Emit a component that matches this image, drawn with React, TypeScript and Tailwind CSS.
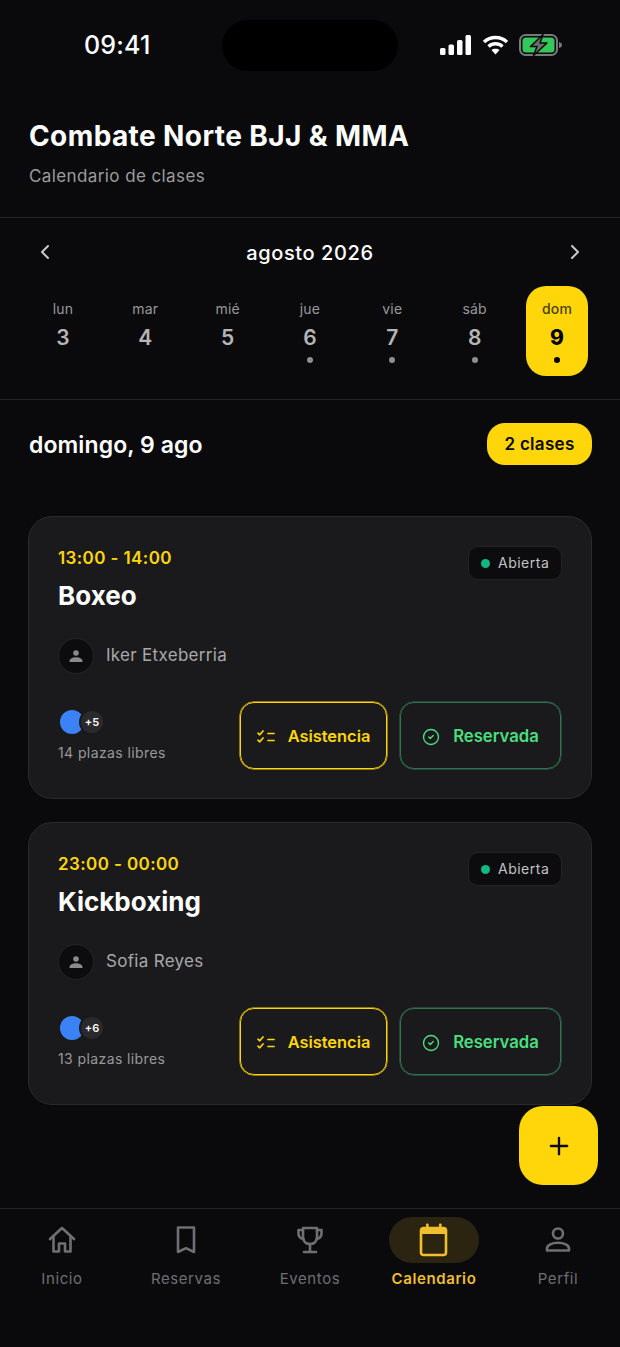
import React from "react";
import { ChevronLeft, ChevronRight, Plus, CircleCheck } from "lucide-react";

const days = [
  { d: "lun", n: "3", dot: false },
  { d: "mar", n: "4", dot: false },
  { d: "mié", n: "5", dot: false },
  { d: "jue", n: "6", dot: true },
  { d: "vie", n: "7", dot: true },
  { d: "sáb", n: "8", dot: true },
  { d: "dom", n: "9", dot: true, active: true },
];

function StatusIcons() {
  return (
    <div className="flex items-center gap-[10px]">
      <svg width="32" height="20" viewBox="0 0 32 20" fill="white">
        <rect x="0" y="13" width="5.5" height="7" rx="1.5" />
        <rect x="8.5" y="9.5" width="5.5" height="10.5" rx="1.5" />
        <rect x="17" y="5" width="5.5" height="15" rx="1.5" />
        <rect x="25.5" y="0" width="5.5" height="20" rx="1.5" />
      </svg>
      <svg width="27" height="20" viewBox="0 0 27 20" fill="none" stroke="white" strokeWidth="3.4" strokeLinecap="butt">
        <path d="M2 7 C8.5 1 18.5 1 25 7" />
        <path d="M6.5 11.5 C10.5 7.8 16.5 7.8 20.5 11.5" />
        <path d="M13.5 19.5 L9.5 15 C11.5 13.2 15.5 13.2 17.5 15 Z" fill="white" stroke="none" />
      </svg>
      <svg width="44" height="22" viewBox="0 0 44 22" fill="none">
        <rect x="1" y="1" width="37" height="20" rx="5.5" stroke="#77797c" strokeWidth="2" />
        <rect x="3.5" y="3.5" width="32" height="15" rx="3.5" fill="#34c759" />
        <path d="M40 8 C42 8.5 43 9.5 43 11 C43 12.5 42 13.5 40 14 Z" fill="#77797c" />
        <path d="M24 0.5 L11.5 12.5 H18 L14.5 21.5 L28 9 H21 Z" fill="#6a6c6e" stroke="#0a0a0c" strokeWidth="1.5" strokeLinejoin="round" />
      </svg>
    </div>
  );
}

function PersonSolid() {
  return (
    <svg width="14" height="14" viewBox="0 0 14 14" fill="#8a8a8e">
      <circle cx="7" cy="4" r="2.8" />
      <path d="M0.5 12 C0.5 9.5 4 8.2 7 8.2 C10 8.2 13.5 9.5 13.5 12 V13 H0.5 Z" />
    </svg>
  );
}

function Checklist() {
  return (
    <svg width="18" height="14" viewBox="0 0 18 14" fill="none" stroke="#ffd60a" strokeWidth="1.7" strokeLinecap="round" strokeLinejoin="round">
      <path d="M1 3.2 L2.8 4.8 L6 1" />
      <path d="M1 10.2 L2.8 11.8 L6 8" />
      <path d="M11 3.5 H17" />
      <path d="M11 10.5 H17" />
    </svg>
  );
}

function ClassCard({ time, title, coach, extra, free }: { time: string; title: string; coach: string; extra: string; free: string }) {
  return (
    <div className="h-[283px] rounded-[24px] border border-[#2a2a2c] bg-[#1a1a1c] pl-[29px] pr-[29px] pt-[28px] flex flex-col">
      <div className="flex justify-between items-start">
        <div>
          <div className="text-[17px] leading-[26px] font-semibold tracking-[0.4px] text-[#ffd60a]">{time}</div>
          <div className="mt-[9px] text-[26px] leading-[32px] font-bold text-white">{title}</div>
        </div>
        <div className="flex items-center h-[34px] mt-[1px] w-[94px] rounded-[10px] border border-[#242426] bg-[#0c0c0e] pl-[12px] gap-[8px]">
          <span className="w-[9px] h-[9px] rounded-full bg-[#10b981]" />
          <span className="pb-[2px] text-[14px] tracking-[0.5px] text-[#c2c2c4]">Abierta</span>
        </div>
      </div>
      <div className="mt-[26px] flex items-center gap-[12px]">
        <div className="w-[36px] h-[36px] rounded-full bg-[#0c0c0e] border border-[#242426] flex items-center justify-center">
          <PersonSolid />
        </div>
        <span className="text-[17px] tracking-[0.3px] text-[#a8a8aa]">{coach}</span>
      </div>
      <div className="mt-[28px] flex items-center">
        <div className="w-[182px] pt-[2px]">
          <div className="flex items-center h-[24px]">
            <span className="w-[24px] h-[24px] rounded-full bg-[#3b82f6] ml-[2px]" />
            <span className="w-[26px] h-[26px] -ml-[5px] rounded-full bg-[#2a2a2c] border-[2px] border-[#1a1a1c] flex items-center justify-center text-[11px] font-semibold text-white relative">{extra}</span>
          </div>
          <div className="mt-[9px] text-[14px] leading-[20px] tracking-[0.4px] text-[#98989a]">{free}</div>
        </div>
        <div className="flex gap-[13px]">
          <div className="w-[147px] h-[67px] pt-[2px] rounded-[14px] border border-[#ffd60a] shadow-[0_0_0_0.5px_#ffd60a] flex items-center justify-center gap-[13px] text-[#ffd60a] text-[16.4px] font-semibold">
            <Checklist />
            <span>Asistencia</span>
          </div>
          <div className="w-[161px] h-[67px] pt-[2px] rounded-[14px] border border-[#2f7350] shadow-[0_0_0_0.5px_#2f7350] flex items-center justify-center gap-[13px] text-[#4ade80] text-[16.7px] font-semibold">
            <CircleCheck size={18} strokeWidth={1.8} />
            <span>Reservada</span>
          </div>
        </div>
      </div>
    </div>
  );
}

const Gray = "#6e6e73";

function NavItem({ label, icon, active }: { label: string; icon: React.ReactNode; active?: boolean }) {
  return (
    <div className="w-[124px] flex flex-col items-center">
      <div className={`w-[90px] h-[46px] rounded-[23px] flex items-center justify-center ${active ? "bg-[#2b2411]" : ""}`}>{icon}</div>
      <div className={`mt-[5px] text-[15px] leading-[22px] tracking-[0.6px] ${active ? "font-semibold text-[#f0bf2e]" : "text-[#6e6e73]"}`}>{label}</div>
    </div>
  );
}

export default function App() {
  return (
    <div className="relative w-[620px] h-[1347px] bg-[#0a0a0c] overflow-hidden flex flex-col text-white" style={{ fontFamily: "Inter, 'Liberation Sans', sans-serif" }}>
      <div className="h-[91px] flex items-start pt-[20px] pl-[84px] shrink-0">
        <div className="w-[68px] h-[51px] flex items-center text-[25px] font-medium tracking-[0.2px] text-white">09:41</div>
        <div className="ml-[70px] w-[176px] h-[51px] rounded-[26px] bg-black" />
        <div className="ml-[42px] h-[51px] flex items-center -mt-[1px]"><StatusIcons /></div>
      </div>

      <div className="h-[127px] shrink-0 border-b border-[#232426] px-[29px] pt-[25px]">
        <h1 className="text-[28px] leading-[40px] font-bold tracking-[0.4px] text-white">Combate Norte BJJ &amp; MMA</h1>
        <p className="mt-[9px] text-[17px] leading-[22px] tracking-[0.4px] text-[#9c9c9e]">Calendario de clases</p>
      </div>

      <div className="h-[182px] shrink-0 border-b border-[#232426]">
        <div className="flex items-center justify-between h-[35px] mt-[17px] px-[33px]">
          <ChevronLeft size={24} color="#c8c8cc" strokeWidth={2} className="-mt-[2px]" />
          <span className="text-[20px] font-medium tracking-[0.6px] text-white">agosto 2026</span>
          <ChevronRight size={24} color="#c8c8cc" strokeWidth={2} className="-mt-[2px]" />
        </div>
        <div className="mt-[16px] px-[32px] flex justify-between">
          {days.map((x) => (
            <div key={x.d} className={`w-[62px] h-[90px] rounded-[20px] flex flex-col items-center pt-[13px] ${x.active ? "bg-[#ffd60a]" : ""}`}>
              <div className={`text-[14px] leading-[19px] tracking-[0.2px] ${x.active ? "text-[#4a3e00] font-medium" : "text-[#98989a]"}`}>{x.d}</div>
              <div className={`mt-[7px] text-[21px] leading-[26px] ${x.active ? "text-black font-extrabold" : "text-[#b5b5b7] font-semibold"}`}>{x.n}</div>
              {x.dot && <div className={`mt-[6px] w-[6px] h-[6px] rounded-full ${x.active ? "bg-black" : "bg-[#8e8e90]"}`} />}
            </div>
          ))}
        </div>
      </div>

      <div className="flex items-center justify-between pl-[29px] pr-[28px] pt-[23px] shrink-0">
        <span className="pt-[2px] text-[23px] font-semibold tracking-[0.1px] text-white">domingo, 9 ago</span>
        <span className="w-[105px] h-[42px] pt-[2px] rounded-[18px] bg-[#ffd60a] flex items-center justify-center text-[17px] font-semibold tracking-[0.3px] text-[#0a0a0c]">2 clases</span>
      </div>

      <div className="mt-[51px] mx-[28px] flex flex-col gap-[23px]">
        <ClassCard time="13:00 - 14:00" title="Boxeo" coach="Iker Etxeberria" extra="+5" free="14 plazas libres" />
        <ClassCard time="23:00 - 00:00" title="Kickboxing" coach="Sofia Reyes" extra="+6" free="13 plazas libres" />
      </div>

      <div className="absolute left-[519px] top-[1106px] w-[79px] h-[79px] rounded-[24px] bg-[#ffd60a] flex items-center justify-center">
        <Plus size={28} color="#0a0a0c" strokeWidth={2} />
      </div>

      <div className="mt-auto h-[139px] shrink-0 border-t border-[#232426] pt-[8px] flex">
        <NavItem label="Inicio" icon={
          <svg width="30" height="30" viewBox="0 0 30 30" fill="none" stroke={Gray} strokeWidth="2.6" strokeLinejoin="round" strokeLinecap="round">
            <path d="M3 14 L15 3 L27 14" />
            <path d="M6.5 11.5 V26.5 H12 V18.5 H18 V26.5 H23.5 V11.5" />
          </svg>} />
        <NavItem label="Reservas" icon={
          <svg width="30" height="30" viewBox="0 0 30 30" fill="none" stroke={Gray} strokeWidth="2.6" strokeLinejoin="round">
            <path d="M7 2.5 H23 V27 L15 23.2 L7 27 Z" />
          </svg>} />
        <NavItem label="Eventos" icon={
          <svg width="30" height="30" viewBox="0 0 30 30" fill="none" stroke={Gray} strokeWidth="2.6" strokeLinejoin="round" strokeLinecap="round">
            <path d="M8 3 H22 V12 C22 16.5 19 19 15 19 C11 19 8 16.5 8 12 Z" />
            <path d="M8 5 H3.5 V8.5 C3.5 11.5 5.5 13.5 8.5 14" />
            <path d="M22 5 H26.5 V8.5 C26.5 11.5 24.5 13.5 21.5 14" />
            <path d="M15 19 V26.5" />
            <path d="M9 27 H21" />
          </svg>} />
        <NavItem active label="Calendario" icon={
          <svg width="30" height="34" viewBox="0 0 30 34" fill="none" className="-mt-[1px]">
            <rect x="2" y="5" width="25" height="27" rx="2.5" stroke="#f0bf2e" strokeWidth="2.6" />
            <path d="M1 6 H28 V11 H1 Z" fill="#f0bf2e" />
            <rect x="7" y="0.5" width="2.6" height="6" rx="1" fill="#f0bf2e" />
            <rect x="20" y="0.5" width="2.6" height="6" rx="1" fill="#f0bf2e" />
          </svg>} />
        <NavItem label="Perfil" icon={
          <svg width="30" height="30" viewBox="0 0 30 30" fill="none" stroke={Gray} strokeWidth="2.6" strokeLinejoin="round">
            <circle cx="15" cy="8.5" r="5" />
            <path d="M4 25.5 V23.5 C4 20 9 17.8 15 17.8 C21 17.8 26 20 26 23.5 V25.5 Z" />
          </svg>} />
      </div>
    </div>
  );
}
